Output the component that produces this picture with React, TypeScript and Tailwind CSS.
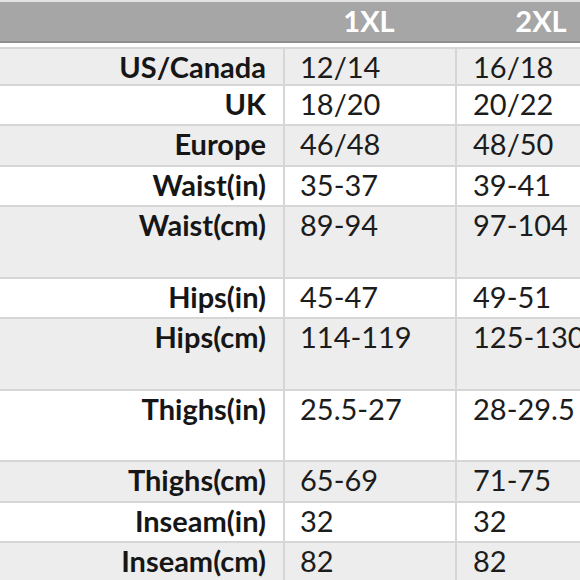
import React from 'react';

type Row = { label: string; a: string; b: string; h: number; bg: string };

const rows: Row[] = [
  { label: 'US/Canada', a: '12/14', b: '16/18', h: 37, bg: 'bg-[#ededed]' },
  { label: 'UK', a: '18/20', b: '20/22', h: 40, bg: 'bg-white' },
  { label: 'Europe', a: '46/48', b: '48/50', h: 41, bg: 'bg-[#ededed]' },
  { label: 'Waist(in)', a: '35-37', b: '39-41', h: 40, bg: 'bg-white' },
  { label: 'Waist(cm)', a: '89-94', b: '97-104', h: 72, bg: 'bg-[#ededed]' },
  { label: 'Hips(in)', a: '45-47', b: '49-51', h: 40, bg: 'bg-white' },
  { label: 'Hips(cm)', a: '114-119', b: '125-130', h: 72, bg: 'bg-[#ededed]' },
  { label: 'Thighs(in)', a: '25.5-27', b: '28-29.5', h: 71, bg: 'bg-white' },
  { label: 'Thighs(cm)', a: '65-69', b: '71-75', h: 41, bg: 'bg-[#ededed]' },
  { label: 'Inseam(in)', a: '32', b: '32', h: 40, bg: 'bg-white' },
  { label: 'Inseam(cm)', a: '82', b: '82', h: 40, bg: 'bg-[#ededed]' },
];

const App: React.FC = () => {
  return (
    <div className="w-[580px] h-[580px] overflow-hidden bg-white font-['Lato',sans-serif] text-[29px]">
      <div className="w-[627px]">
        {/* Header */}
        <div className="border-t-2 border-[#e2e2e2] bg-[#a6a6a6] border-b-2 border-b-[#8f8f8f] h-[43px] grid grid-cols-[283px_172px_172px] text-white font-bold leading-[38px]">
          <div />
          <div className="text-center">1XL</div>
          <div className="text-center">2XL</div>
        </div>
        <div className="h-[4px] bg-white" />

        {/* Rows */}
        {rows.map((r) => (
          <div
            key={r.label}
            className={`grid grid-cols-[283px_172px_172px] border-t-2 border-[#d6d6d6] ${r.bg}`}
            style={{ height: r.h }}
          >
            <div className="text-right pr-[17px] font-bold text-[#161616] leading-[35px]">{r.label}</div>
            <div className="border-l-2 border-[#d6d6d6] pl-[15px] text-[#1c1c1c] leading-[35px]">{r.a}</div>
            <div className="border-l-2 border-[#d6d6d6] pl-[16px] text-[#1c1c1c] leading-[35px]">{r.b}</div>
          </div>
        ))}
      </div>
    </div>
  );
};

export default App;
